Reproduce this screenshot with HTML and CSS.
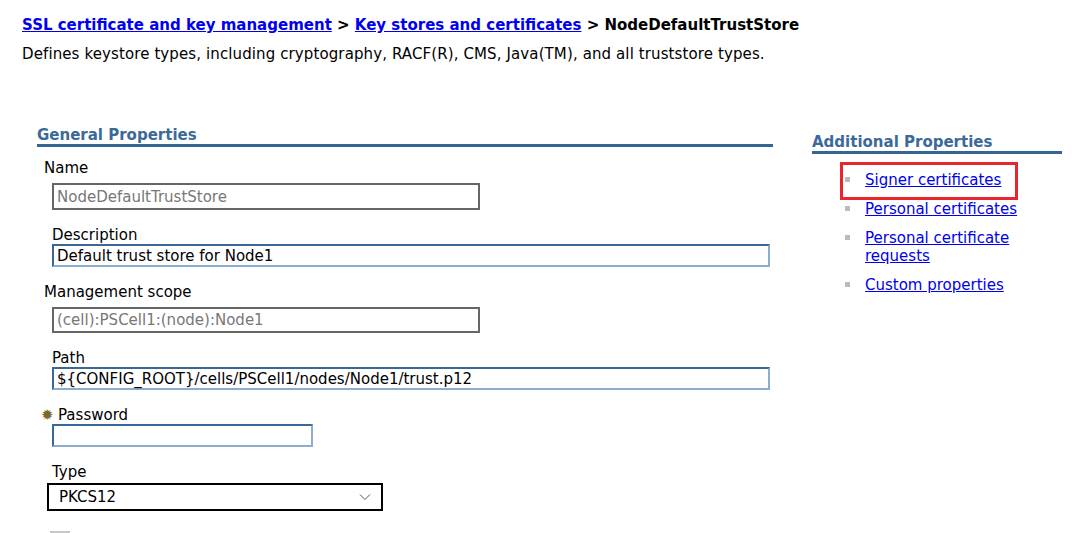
FILE: index.html
```html
<!DOCTYPE html>
<html>
<head>
<meta charset="utf-8">
<link rel="stylesheet" href="styles.css">
</head>
<body>
<div class="crumbs"><a href="#">SSL certificate and key management</a> &gt; <a href="#">Key stores and certificates</a> &gt; NodeDefaultTrustStore</div>
<p class="intro">Defines keystore types, including cryptography, RACF(R), CMS, Java(TM), and all truststore types.</p>
<div class="main">
  <section class="general">
    <h2 class="sec-title">General Properties</h2>
    <div class="field">
      <label class="lbl lbl-out">Name</label>
      <div class="box box-ro box-short">NodeDefaultTrustStore</div>
    </div>
    <div class="field">
      <label class="lbl lbl-tight">Description</label>
      <div class="box box-edit box-long">Default trust store for Node1</div>
    </div>
    <div class="field">
      <label class="lbl lbl-out">Management scope</label>
      <div class="box box-ro box-short box-scope">(cell):PSCell1:(node):Node1</div>
    </div>
    <div class="field">
      <label class="lbl lbl-tight">Path</label>
      <div class="box box-edit box-long">${CONFIG_ROOT}/cells/PSCell1/nodes/Node1/trust.p12</div>
    </div>
    <div class="field">
      <label class="lbl lbl-req"><span class="star">&#10041;</span>Password</label>
      <div class="box box-edit box-pass"></div>
    </div>
    <div class="field">
      <label class="lbl lbl-type">Type</label>
      <div class="select"><span>PKCS12</span><svg class="chev" width="12" height="8" viewBox="0 0 12 8"><path d="M1 1.5 L6 6.5 L11 1.5" fill="none" stroke="#555" stroke-width="1"/></svg></div>
    </div>
    <div class="stub"></div>
  </section>
  <aside class="additional">
    <h2 class="sec-title">Additional Properties</h2>
    <ul class="links">
      <li class="hl"><a href="#">Signer certificates</a><span class="mark"></span></li>
      <li><a href="#">Personal certificates</a></li>
      <li><a href="#">Personal certificate requests</a></li>
      <li><a href="#">Custom properties</a></li>
    </ul>
  </aside>
</div>
</body>
</html>
```
FILE: styles.css
```css
html, body {
  margin: 0;
  padding: 0;
  background: #fff;
}
body {
  font-family: "DejaVu Sans", Verdana, sans-serif;
  color: #000;
  padding: 15px 0 0 22px;
  height: 518px;
  overflow: hidden;
}
a { color: #0000ee; }
.crumbs {
  font-size: 15px;
  font-weight: bold;
  line-height: 20px;
  white-space: nowrap;
}
.intro {
  margin: 9px 0 0;
  font-size: 15px;
  line-height: 20px;
  letter-spacing: 0.11px;
}
.main {
  display: flex;
  margin-top: 62px;
}
.general {
  width: 736px;
  margin-left: 15px;
}
.sec-title {
  margin: 0;
  font-size: 15px;
  line-height: 18px;
  font-weight: bold;
  color: #3b6a99;
  border-bottom: 3px solid #376593;
}
.field {
  display: flex;
  flex-direction: column;
  align-items: flex-start;
  margin-top: 16px;
}
.general .sec-title + .field { margin-top: 12px; }
.lbl {
  font-size: 15px;
  line-height: 18px;
  padding-left: 15px;
}
.lbl-out { padding-left: 7px; margin-bottom: 6px; }
.lbl-tight { margin-bottom: 0; }
.lbl-req { padding-left: 4px; display: flex; align-items: center; }
.lbl-type { margin-bottom: 2px; }
.star {
  color: #7a6a2a;
  font-size: 15px;
  width: 17px;
}
.box {
  margin-left: 15px;
  box-sizing: border-box;
  font-size: 15px;
  padding: 0 3px;
  white-space: nowrap;
  display: flex;
  align-items: center;
}
.box-ro {
  border: 2px solid #666;
  color: #777;
  height: 27px;
}
.box-scope { height: 26px; }
.box-short { width: 428px; }
.box-edit {
  border: 2px solid;
  border-color: #3a6896 #8cadcb #8cadcb #3a6896;
  height: 23px;
}
.box-long { width: 718px; }
.box-pass { width: 261px; }
.select {
  margin-left: 10px;
  box-sizing: border-box;
  width: 336px;
  height: 28px;
  border: 2px solid #000;
  display: flex;
  align-items: center;
  justify-content: space-between;
  padding: 0 10px 0 10px;
  font-size: 15px;
}
.stub {
  margin: 20px 0 0 13px;
  width: 20px;
  height: 3px;
  background: #c8c8c8;
}
.additional {
  width: 250px;
  margin-left: 39px;
  padding-top: 7px;
}
.links {
  list-style: none;
  margin: 17px 0 0;
  padding: 0 0 0 33px;
}
.links li {
  position: relative;
  font-size: 15px;
  line-height: 18px;
  padding-left: 20px;
  margin-bottom: 11px;
}
.links li::before {
  content: "";
  position: absolute;
  left: 0;
  top: 6px;
  width: 5px;
  height: 5px;
  background: #bbb;
}
.mark {
  position: absolute;
  left: -5px;
  top: -9px;
  width: 178px;
  height: 38px;
  box-sizing: border-box;
  border: 3px solid #e8262b;
}
```
